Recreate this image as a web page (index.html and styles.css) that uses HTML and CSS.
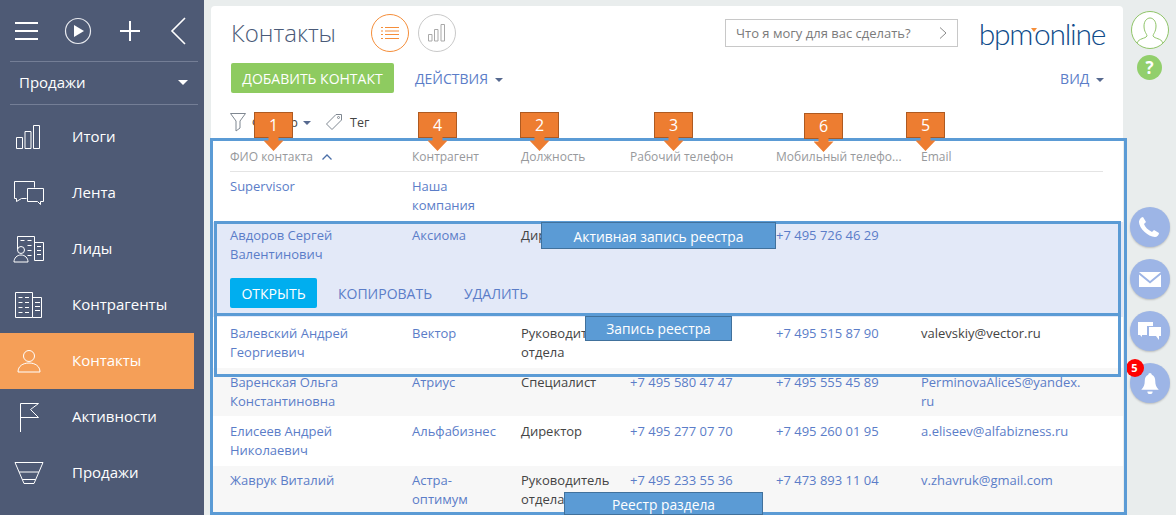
FILE: index.html
```html
<!DOCTYPE html>
<html lang="ru">
<head>
    <meta charset="UTF-8">
    <title>Контакты</title>
    <link rel="stylesheet" href="styles.css">
</head>
<body>
    <div class="app">
        <aside class="sidebar">
            <div class="top-tools">
                <svg width="23" height="20" viewBox="0 0 23 20"><path d="M0 2h23M0 10h23M0 18h23" stroke="#fff" stroke-width="2" fill="none"/></svg>
                <svg width="28" height="28" viewBox="0 0 28 28"><circle cx="14" cy="14" r="12.500" stroke="#e8eaef" stroke-width="1.200" fill="none"/><path d="M10 8l10 6-10 6z" fill="#fff"/></svg>
                <svg class="tool-add" width="22" height="22" viewBox="0 0 22 22"><path d="M11 1v20M1 11h20" stroke="#fff" stroke-width="2" fill="none"/></svg>
                <svg class="tool-back" width="16" height="28" viewBox="0 0 16 28"><path d="M15 1L2 14l13 13" stroke="#fff" stroke-width="1.600" fill="none"/></svg>
            </div>
            <div class="workplace">
                <span>Продажи</span>
                <i class="caret caret-white"></i>
            </div>
            <nav class="menu">
                <a class="menu-item">
                    <svg class="menu-icon" width="30" height="26" viewBox="0 0 30 26"><path d="M2.500 13.500h6v11h-6zM11 7.500h6v17h-6zM19.500 1.500h6v23h-6z"/></svg>
                    <span>Итоги</span>
                </a>
                <a class="menu-item">
                    <svg class="menu-icon" width="32" height="26" viewBox="0 0 32 26"><path d="M21.500 7.500V1.500h-20v17h2v3l5-3h5"/><path d="M14.500 8.500h16v13h-3v3l-3-3h-10z"/></svg>
                    <span>Лента</span>
                </a>
                <a class="menu-item">
                    <svg class="menu-icon" width="32" height="28" viewBox="0 0 32 28"><path d="M4.500 14V1.500h17v24M21.500 7.500h9v18h-9M7.500 5.500h4M14.500 5.500h4M14.500 10.500h4M14.500 15.500h4M14.500 20.500h4M24 11.500h4M24 15.500h4M24 19.500h4"/><circle cx="8" cy="15" r="3.500"/><path d="M1 27c0-4 3-7 7-7s7 3 7 7z"/></svg>
                    <span>Лиды</span>
                </a>
                <a class="menu-item">
                    <svg class="menu-icon" width="30" height="28" viewBox="0 0 30 28"><path d="M1.500 1.500h17v25h-17zM18.500 6.500h9v20h-9M4.500 6.500h4M11 6.500h4M4.500 11.500h4M11 11.500h4M4.500 16.500h4M11 16.500h4M4.500 21.500h4M11 21.500h4M21 11.500h5M21 15.500h5M21 19.500h5"/></svg>
                    <span>Контрагенты</span>
                </a>
                <a class="menu-item active">
                    <svg class="menu-icon" width="24" height="24" viewBox="0 0 24 24"><circle cx="12" cy="7" r="5.500"/><path d="M1 23c0-6 5-9 11-9s11 3 11 9z"/></svg>
                    <span>Контакты</span>
                </a>
                <a class="menu-item">
                    <svg class="menu-icon" width="22" height="30" viewBox="0 0 22 30"><path d="M2.500 30V1.500h18l-8 6 8 8h-18"/></svg>
                    <span>Активности</span>
                </a>
                <a class="menu-item">
                    <svg class="menu-icon" width="30" height="24" viewBox="0 0 30 24"><path d="M1 1.500h28l-9 21H10zM5.200 11h19.600M8.500 18.500h13"/></svg>
                    <span>Продажи</span>
                </a>
            </nav>
        </aside>

        <main class="card">
            <header class="head">
                <h1>Контакты</h1>
                <span class="view-btn view-on">
                    <svg width="18" height="14" viewBox="0 0 18 14"><path d="M0 1.500h2M4 1.500h14M0 5h2M4 5h14M0 8.500h2M4 8.500h14M0 12.500h2M4 12.500h14" stroke="#f58e3a" stroke-width="1"/></svg>
                </span>
                <span class="view-btn">
                    <svg width="18" height="18" viewBox="0 0 18 18"><path d="M.5 10.500h3.500v6.500H.5zM6.500 5.500H10v11.500H6.500zM13 .5h3.500v16.500H13z" fill="none" stroke="#a9a9a9"/></svg>
                </span>
                <div class="ask">
                    <span>Что я могу для вас сделать?</span>
                    <svg width="8" height="12" viewBox="0 0 8 12"><path d="M1 .5L7 6l-6 5.500" stroke="#8a8a8a" fill="none"/></svg>
                </div>
                <div class="logo">bpm<i class="logo-mark"></i>online</div>
            </header>

            <div class="actions">
                <button class="btn-add">ДОБАВИТЬ КОНТАКТ</button>
                <a class="link-btn">ДЕЙСТВИЯ <i class="caret"></i></a>
                <a class="link-btn view-link">ВИД <i class="caret"></i></a>
            </div>

            <div class="filters">
                <svg width="16" height="19" viewBox="0 0 16 19"><path d="M.5.500h15L10 8v7l-4 3V8z" fill="none" stroke="#7f8791"/></svg>
                <span class="filter-word">Фильтр <i class="caret caret-small"></i></span>
                <svg width="18" height="18" viewBox="0 0 18 18"><path d="M11 1.500h5.500V7L7 16.500 1.500 11z" fill="none" stroke="#7f8791"/><circle cx="13.500" cy="4.500" r="1" fill="none" stroke="#7f8791"/></svg>
                <span class="tag-word">Тег</span>
            </div>

            <div class="grid-head row-cols">
                <span>ФИО контакта <svg class="sort" width="10" height="6" viewBox="0 0 10 6"><path d="M.5 5.500L5 1l4.500 4.500" stroke="#4b6fa8" stroke-width="1.300" fill="none"/></svg></span>
                <span>Контрагент</span>
                <span>Должность</span>
                <span>Рабочий телефон</span>
                <span>Мобильный телефо...</span>
                <span>Email</span>
            </div>

            <div class="row row-cols row-first">
                <a>Supervisor</a><a>Наша компания</a><span></span><span></span><span></span><span></span>
            </div>
            <div class="row row-active">
                <div class="row-cols">
                    <a>Авдоров Сергей Валентинович</a><a>Аксиома</a><span>Директор</span><span></span><a>+7 495 726 46 29</a><span></span>
                </div>
                <div class="row-buttons">
                    <button class="btn-open">ОТКРЫТЬ</button>
                    <a>КОПИРОВАТЬ</a>
                    <a>УДАЛИТЬ</a>
                </div>
            </div>
            <div class="row row-cols row-next">
                <a>Валевский Андрей Георгиевич</a><a>Вектор</a><span>Руководитель отдела</span><a></a><a>+7 495 515 87 90</a><span>valevskiy@vector.ru</span>
            </div>
            <div class="row row-cols row-grey">
                <a>Варенская Ольга Константиновна</a><a>Атриус</a><span>Специалист</span><a>+7 495 580 47 47</a><a>+7 495 555 45 89</a><a>PerminovaAliceS@yandex.<br>ru</a>
            </div>
            <div class="row row-cols">
                <a>Елисеев Андрей Николаевич</a><a>Альфабизнес</a><span>Директор</span><a>+7 495 277 07 70</a><a>+7 495 260 01 95</a><a>a.eliseev@alfabizness.ru</a>
            </div>
            <div class="row row-cols row-grey row-last">
                <a>Жаврук Виталий</a><a>Астра-оптимум</a><span>Руководитель отдела</span><a>+7 495 233 55 36</a><a>+7 473 893 11 04</a><a>v.zhavruk@gmail.com</a>
            </div>
        </main>

        <aside class="rail">
            <svg class="avatar" width="38" height="38" viewBox="0 0 38 38"><circle cx="19" cy="19" r="18.500" fill="#fff" stroke="#8fc468"/><path d="M6 32c2-5 8-4 10-7 0-2-3-4-3-10 0-5 3-8 6-8s6 3 6 8c0 6-3 8-3 10 2 3 8 2 10 7" fill="none" stroke="#8fc468"/></svg>
            <span class="help">?</span>
            <div class="round-list">
                <span class="round">
                    <svg width="21" height="20" viewBox="0 0 21 20"><path d="M4 0l3 5-2 2c1 3 4 6 8 8l2-2 5 3c0 2-2 4-4 4C9 20 0 11 0 5c0-2 2-5 4-5z" fill="#fff"/></svg>
                </span>
                <span class="round">
                    <svg width="22" height="15" viewBox="0 0 22 15"><path d="M0 0l11 9L22 0zM0 2.500V15h22V2.500L11 11.500z" fill="#fff"/></svg>
                </span>
                <span class="round">
                    <svg width="23" height="18" viewBox="0 0 23 18"><path d="M0 0h15v4H9v9H4v2l-2-2H0z" fill="#fff"/><path d="M11 5h12v9h-2v4l-3-4h-7z" fill="#fff"/></svg>
                </span>
                <span class="round">
                    <svg width="18" height="21" viewBox="0 0 20 24"><path d="M10 0c1 0 2 1 2 2 3 1 4 4 4 7 0 4 1 7 4 10H0c3-3 4-6 4-10 0-3 1-6 4-7 0-1 1-2 2-2zM7 21h6c0 2-1 3-3 3s-3-1-3-3z" fill="#fff"/></svg>
                    <em class="badge">5</em>
                </span>
            </div>
        </aside>

        <!-- annotations over the screenshot -->
        <div class="frame frame-grid"></div>
        <div class="frame frame-active"></div>
        <div class="frame frame-row"></div>

        <div class="note note-active">Активная запись реестра</div>
        <div class="note note-row">Запись реестра</div>
        <div class="note note-grid">Реестр раздела</div>

        <div class="pin pin-1">1</div>
        <div class="pin pin-2">4</div>
        <div class="pin pin-3">2</div>
        <div class="pin pin-4">3</div>
        <div class="pin pin-5">6</div>
        <div class="pin pin-6">5</div>
    </div>
</body>
</html>
```
FILE: styles.css
```css
* {
    margin: 0;
    padding: 0;
    box-sizing: border-box;
}

body {
    font-family: 'Open Sans', sans-serif;
    font-size: 13px;
    color: #444;
    background: #e9eded;
    overflow: hidden;
}

a {
    color: #5b7dc8;
}

.app {
    position: relative;
    width: 1176px;
    height: 515px;
    display: flex;
    overflow: hidden;
}

/* Sidebar */
.sidebar {
    width: 204px;
    flex: none;
    background: #4e5a75;
    color: #fff;
}

.top-tools {
    height: 62px;
    margin: 0 6px 0 10px;
    padding-left: 5px;
    border-bottom: 1px solid #747e96;
    display: flex;
    align-items: center;
    gap: 26px;
}

.tool-add {
    margin-left: 1px;
}

.tool-back {
    margin-left: 3px;
}

.workplace {
    height: 43px;
    margin: 0 6px 0 10px;
    padding: 0 10px 2px 9px;
    border-bottom: 1px solid #747e96;
    display: flex;
    align-items: center;
    justify-content: space-between;
    font-size: 15px;
}

.menu {
    padding-top: 4px;
}

.menu-item {
    height: 56px;
    width: 194px;
    display: flex;
    align-items: center;
    position: relative;
    padding: 0 0 2px 72px;
    color: #fff;
    font-size: 15px;
}

.menu-item.active {
    background: #f59f58;
}

.menu-icon {
    position: absolute;
    top: 50%;
    left: 29px;
    transform: translate(-50%, -50%);
    fill: none;
    stroke: #fff;
    stroke-width: 1;
}

.caret {
    display: inline-block;
    width: 0;
    height: 0;
    border-left: 4px solid transparent;
    border-right: 4px solid transparent;
    border-top: 4px solid #56698f;
    vertical-align: middle;
    margin-left: 3px;
}

.caret-white {
    border-left-width: 5px;
    border-right-width: 5px;
    border-top: 5px solid #fff;
}

.caret-small {
    margin-left: 2px;
}

/* Main card */
.card {
    width: 912px;
    height: 509px;
    margin: 6px 0 0 7px;
    flex: none;
    background: #fff;
    border-radius: 4px 4px 0 0;
    padding: 0 20px 0 19px;
    overflow: hidden;
}

.head {
    height: 52px;
    display: flex;
    align-items: center;
    padding-top: 1px;
}

.head h1 {
    font-weight: 300;
    font-size: 24px;
    color: #4a5a78;
    width: 140px;
    margin-left: 1px;
}

.view-btn {
    width: 38px;
    height: 38px;
    border-radius: 50%;
    border: 1px solid #c9c9c9;
    display: flex;
    align-items: center;
    justify-content: center;
    margin-right: 9px;
}

.view-on {
    border-color: #f58e3a;
}

.ask {
    width: 233px;
    height: 28px;
    margin-left: 260px;
    border: 1px solid #c8c8c8;
    display: flex;
    align-items: center;
    justify-content: space-between;
    padding: 0 10px;
    color: #7b7b7b;
    font-size: 13px;
}

.logo {
    margin-left: auto;
    margin-right: -2px;
    font-family: 'Lato', sans-serif;
    font-size: 30px;
    font-weight: 300;
    letter-spacing: -1.300px;
    color: #0f4c8a;
    line-height: 1;
}

.logo-mark {
    display: inline-block;
    width: 0;
    height: 0;
    border-left: 3px solid transparent;
    border-right: 3px solid transparent;
    border-top: 4px solid #f58e3a;
    vertical-align: 13px;
    margin: 0 -3px 0 -1px;
}

.actions {
    height: 30px;
    margin-top: 5px;
    display: flex;
    align-items: center;
    font-size: 14px;
}

.btn-add {
    height: 30px;
    width: 163px;
    margin-left: 1px;
    background: #8ecb60;
    color: #fff;
    border: none;
    border-radius: 2px;
    font: 14px 'Open Sans', sans-serif;
}

.link-btn {
    margin-left: 21px;
}

.view-link {
    margin-left: auto;
    margin-right: -1px;
}

.filters {
    height: 20px;
    margin-top: 19px;
    display: flex;
    align-items: center;
    color: #444;
    font-size: 12.500px;
}

.filter-word {
    margin-left: 6px;
    width: 73px;
}

.tag-word {
    margin-left: 7px;
}

/* Grid */
.row-cols {
    display: grid;
    grid-template-columns: 182px 109px 109px 146px 145px 182px;
    line-height: 19px;
}

.row-cols > * {
    padding-right: 14px;
}

.grid-head {
    height: 32px;
    margin-top: 8px;
    padding-top: 7px;
    color: #97999c;
    font-size: 12px;
    border-bottom: 1px solid #e4e4e4;
    white-space: nowrap;
}

.sort {
    margin-left: 6px;
    vertical-align: 1px;
}

.row {
    margin: 0 -20px 0 -19px;
    padding: 6px 0 0 19px;
    height: 50px;
}

.row-first {
    padding-top: 5px;
}

.row-active {
    height: 95px;
    padding-top: 4px;
    background: #e3e9f8;
}

.row-next {
    height: 51px;
    padding-top: 7px;
}

.row-grey {
    height: 48px;
    padding-top: 5px;
    background: #f7f7f7;
}

.row-last {
    height: 50px;
}

.row-buttons {
    margin-top: 14px;
    display: flex;
    align-items: center;
    font-size: 14px;
}

.row-buttons a {
    margin-right: 32px;
}

.btn-open {
    width: 87px;
    height: 30px;
    background: #00aeef;
    color: #fff;
    border: none;
    border-radius: 2px;
    font: 14px 'Open Sans', sans-serif;
    margin-right: 21px;
}

/* Right rail */
.rail {
    flex: 1;
    display: flex;
    flex-direction: column;
    align-items: center;
    padding-top: 11px;
    position: relative;
}

.avatar {
    flex: none;
}

.help {
    width: 25px;
    height: 25px;
    margin-top: 6px;
    border-radius: 50%;
    background: #92cf6c;
    color: #fff;
    font-weight: 700;
    font-size: 17px;
    line-height: 25px;
    text-align: center;
}

.round-list {
    margin-top: 127px;
    display: flex;
    flex-direction: column;
    gap: 12px;
}

.round {
    position: relative;
    width: 40px;
    height: 40px;
    border-radius: 50%;
    background: #9db5e6;
    box-shadow: 0 1px 2px rgba(0, 0, 0, 0.2);
    display: flex;
    align-items: center;
    justify-content: center;
}

.badge {
    position: absolute;
    left: -4px;
    top: -4px;
    width: 18px;
    height: 18px;
    border-radius: 50%;
    background: #f00;
    color: #fff;
    font-style: normal;
    font-weight: 700;
    font-size: 11px;
    line-height: 18px;
    text-align: center;
}

/* Annotations */
.frame {
    position: absolute;
    border: 3px solid #5b9bd5;
    pointer-events: none;
}

.frame-grid {
    left: 210px;
    top: 138px;
    width: 917px;
    height: 377px;
}

.frame-active {
    left: 214px;
    top: 221px;
    width: 907px;
    height: 95px;
}

.frame-row {
    left: 214px;
    top: 313px;
    width: 907px;
    height: 64px;
}

.note {
    position: absolute;
    background: #5b9bd5;
    border: 1px solid #41719c;
    color: #fff;
    font-size: 13.800px;
    text-align: center;
}

.note-active {
    left: 541px;
    top: 222px;
    width: 235px;
    height: 27px;
    line-height: 27px;
}

.note-row {
    left: 585px;
    top: 316px;
    width: 147px;
    height: 25px;
    line-height: 23px;
}

.note-grid {
    left: 564px;
    top: 492px;
    width: 199px;
    height: 23px;
    line-height: 24px;
}

.pin {
    position: absolute;
    top: 112px;
    width: 39px;
    height: 26px;
    background: #ed7d31;
    border: 1px solid #ae5a21;
    color: #fff;
    font-size: 16px;
    line-height: 24px;
    text-align: center;
}

.pin::after {
    content: '';
    position: absolute;
    left: 50%;
    top: 24px;
    margin-left: -10px;
    width: 20px;
    height: 14px;
    background: #ed7d31;
    clip-path: polygon(25% 0, 75% 0, 75% 25%, 100% 25%, 50% 100%, 0 25%, 25% 25%);
}

.pin-1 { left: 254px; }
.pin-2 { left: 418px; }
.pin-3 { left: 520px; }
.pin-4 { left: 654px; }
.pin-5 { left: 804px; top: 113px; }
.pin-6 { left: 906px; }
```
